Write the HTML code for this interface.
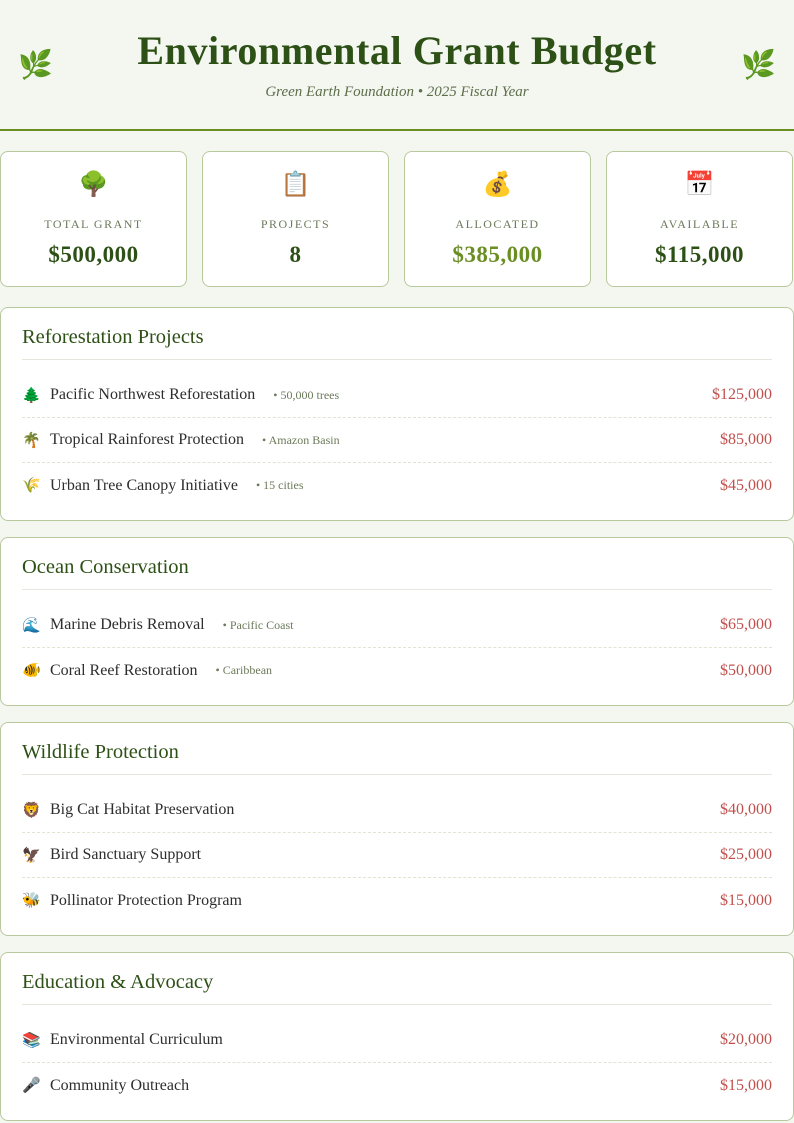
<!DOCTYPE html>
<html><head><meta charset="utf-8"><style>
*{box-sizing:border-box;margin:0;padding:0}
body{width:794px;height:1123px;background:#f4f7f0;font-family:"Liberation Serif","DejaVu Serif",serif;color:#2d2d2d;overflow:hidden}
.hdr{height:131px;border-bottom:2px solid #6b8e23;position:relative;text-align:center}
.hdr h1{position:absolute;top:27px;left:0;right:0;font-size:40px;font-weight:bold;color:#2d5016;letter-spacing:0.6px}
.hdr p{position:absolute;top:84px;left:0;right:0;font-style:italic;font-size:15px;color:#5d6e4b}
.leaf{position:absolute;top:48px;font-size:28px}
.cards{display:flex;gap:15px;margin-top:20px;height:136px}
.card{width:187px;background:#fff;border:1px solid #b9c99e;border-radius:8px;text-align:center;position:relative}
.card .ic{position:absolute;top:18px;left:0;right:0;font-size:24px}
.card .lb{position:absolute;top:65px;left:0;right:0;font-size:12px;letter-spacing:1.5px;color:#6b7a5a}
.card .v{position:absolute;top:90px;left:0;right:0;font-size:23px;font-weight:bold;color:#2d5016;letter-spacing:.5px}
.sec{background:#fff;border:1px solid #b9c99e;border-radius:8px;padding:0 21px;margin-top:20px;padding-bottom:12px}
.sec h2{font-weight:normal;font-size:20.5px;color:#2d5016;height:52px;padding-top:18px;border-bottom:1px solid #e3e8dc}
.row{height:45px;display:flex;align-items:center;border-bottom:1px dashed #dde6cf;font-size:16px}
.row:last-child{border-bottom:none}
.row .e{width:28px;font-size:15px}
.row .n{color:#2d2d2d}
.row .t{font-size:12px;color:#6b7a5a;margin-left:18px}
.row .a{margin-left:auto;color:#c0504d;font-size:16px}
.first{margin-top:13px}
</style></head><body>
<div class="hdr"><span class="leaf" style="left:18px">🌿</span><span class="leaf" style="right:18px">🌿</span>
<h1>Environmental Grant Budget</h1><p>Green Earth Foundation • 2025 Fiscal Year</p></div>
<div class="cards">
<div class="card"><div class="ic">🌳</div><div class="lb">TOTAL GRANT</div><div class="v">$500,000</div></div>
<div class="card"><div class="ic">📋</div><div class="lb">PROJECTS</div><div class="v">8</div></div>
<div class="card"><div class="ic">💰</div><div class="lb">ALLOCATED</div><div class="v" style="color:#6b8e23">$385,000</div></div>
<div class="card"><div class="ic">📅</div><div class="lb">AVAILABLE</div><div class="v">$115,000</div></div>
</div>
<div class="sec"><h2>Reforestation Projects</h2><div class="first">
<div class="row"><span class="e">🌲</span><span class="n">Pacific Northwest Reforestation</span><span class="t">• 50,000 trees</span><span class="a">$125,000</span></div>
<div class="row"><span class="e">🌴</span><span class="n">Tropical Rainforest Protection</span><span class="t">• Amazon Basin</span><span class="a">$85,000</span></div>
<div class="row"><span class="e">🌾</span><span class="n">Urban Tree Canopy Initiative</span><span class="t">• 15 cities</span><span class="a">$45,000</span></div></div></div>
<div class="sec" style="margin-top:16px"><h2>Ocean Conservation</h2><div class="first">
<div class="row"><span class="e">🌊</span><span class="n">Marine Debris Removal</span><span class="t">• Pacific Coast</span><span class="a">$65,000</span></div>
<div class="row"><span class="e">🐠</span><span class="n">Coral Reef Restoration</span><span class="t">• Caribbean</span><span class="a">$50,000</span></div></div></div>
<div class="sec" style="margin-top:16px"><h2>Wildlife Protection</h2><div class="first">
<div class="row"><span class="e">🦁</span><span class="n">Big Cat Habitat Preservation</span><span class="a">$40,000</span></div>
<div class="row"><span class="e">🦅</span><span class="n">Bird Sanctuary Support</span><span class="a">$25,000</span></div>
<div class="row"><span class="e">🐝</span><span class="n">Pollinator Protection Program</span><span class="a">$15,000</span></div></div></div>
<div class="sec" style="margin-top:16px"><h2>Education &amp; Advocacy</h2><div class="first">
<div class="row"><span class="e">📚</span><span class="n">Environmental Curriculum</span><span class="a">$20,000</span></div>
<div class="row"><span class="e">🎤</span><span class="n">Community Outreach</span><span class="a">$15,000</span></div></div></div>
</body></html>
